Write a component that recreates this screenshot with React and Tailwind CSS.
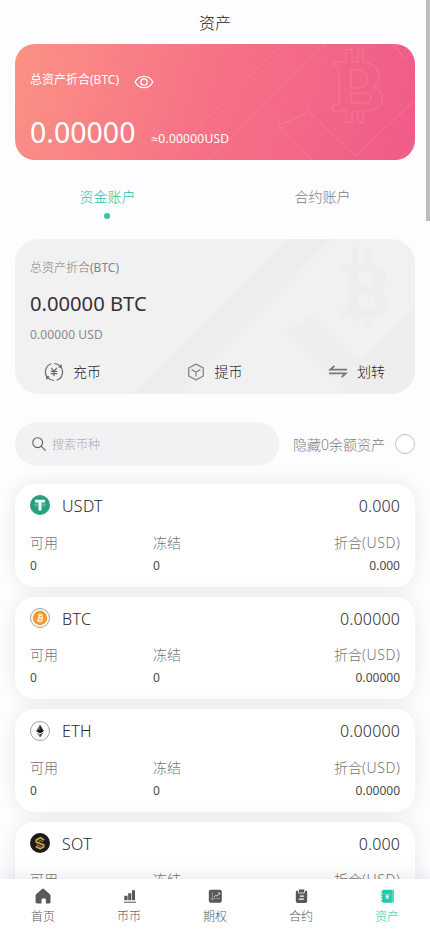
const coins = [
  { name: "USDT", total: "0.000", icon: UsdtIcon },
  { name: "BTC", total: "0.00000", icon: BtcIcon },
  { name: "ETH", total: "0.00000", icon: EthIcon },
  { name: "SOT", total: "0.000", icon: SotIcon },
];

const tabs = [
  { label: "首页", icon: HomeIcon },
  { label: "币币", icon: BarsIcon },
  { label: "期权", icon: OptionIcon },
  { label: "合约", icon: ContractIcon },
  { label: "资产", icon: AssetsIcon, active: true },
];

function UsdtIcon() {
  return (
    <svg width="20" height="20" viewBox="0 0 20 20" className="mb-0.5 shrink-0">
      <circle cx="10" cy="10" r="10" fill="#26a17b" />
      <path d="M5 4.8h10v2.6h-3.5v8.2h-3V7.4H5z" fill="#fff" />
      <path d="M8.5 9C6 9.1 4.3 9.5 4.3 10s1.9 1 5.7 1 5.7-.5 5.7-1-1.7-.9-4.2-1" fill="none" stroke="#9ed6c3" strokeWidth="0.6" />
    </svg>
  );
}

function BtcIcon() {
  return (
    <svg width="20" height="20" viewBox="0 0 20 20" className="mb-px shrink-0">
      <circle cx="10" cy="10" r="9.5" fill="#fffaf0" stroke="#8f8a86" strokeWidth="0.8" />
      <circle cx="10" cy="10" r="7.2" fill="#f09a30" />
      <g transform="rotate(13 10 10)" fill="none" stroke="#fff" strokeWidth="1.1">
        <path d="M7.4 7.2h3.4a1.3 1.3 0 0 1 0 2.7H8.8h2.3a1.5 1.5 0 0 1 0 3H7.4M8.8 7.2v5.6" />
        <path d="M9.2 5.5V7M10.9 5.5V7M9.2 13v1.5M10.9 13v1.5" strokeWidth="0.8" />
      </g>
    </svg>
  );
}

function EthIcon() {
  return (
    <svg width="20" height="20" viewBox="0 0 20 20" className="shrink-0">
      <circle cx="10" cy="10" r="9.5" fill="#fff" stroke="#85858a" strokeWidth="0.8" />
      <path d="M10 3.6 6.2 10.1 10 12.3z" fill="#5d5d60" />
      <path d="M10 3.6l3.8 6.5-3.8 2.2z" fill="#2a2a2d" />
      <path d="M6.2 10.1 10 8.4l3.8 1.7-3.8 2.2z" fill="#161618" />
      <path d="M6.3 11.2 10 13.4v3z" fill="#77777a" />
      <path d="M13.7 11.2 10 13.4v3z" fill="#39393c" />
    </svg>
  );
}

function SotIcon() {
  return (
    <svg width="20" height="20" viewBox="0 0 20 20" className="mb-px shrink-0">
      <circle cx="10" cy="10" r="10" fill="#1c1a1a" />
      <g fill="none" stroke="#c8a83e" strokeWidth="1.7" strokeLinejoin="round">
        <path d="M14.2 6.9 10.4 4.7 6.2 7v2.1l7.5 2.6v2l-3.5 2.1-4.5-2.3" />
        <path d="m12.9 8.7-2.5-1.2-1.8.9M6.6 11.6l3.6 1.7 1.3-.8" strokeWidth="0.9" />
      </g>
    </svg>
  );
}

function HomeIcon() {
  return (
    <svg width="18" height="18" viewBox="0 0 18 18" fill="currentColor">
      <path d="M8.1 2a1.4 1.4 0 0 1 1.8 0l6 5.2c.4.3.6.8.6 1.2v6.7c0 .9-.6 1.4-1.4 1.4h-3.2v-3.7a1.3 1.3 0 0 0-1.3-1.3H8.8a1.3 1.3 0 0 0-1.3 1.3v3.7H3c-.9 0-1.4-.6-1.4-1.4V8.4c0-.5.2-.9.5-1.2z" />
    </svg>
  );
}

function BarsIcon() {
  return (
    <svg width="18" height="18" viewBox="0 0 18 18" fill="currentColor">
      <path d="M4.3 8.7h3.3v4.6H4.3zM8.2 6.2h3.1v7.1H8.2zM12 3.2h3v10.1h-3zM4 14.7h12v1H4z" />
    </svg>
  );
}

function OptionIcon() {
  return (
    <svg width="18" height="18" viewBox="0 0 18 18" fill="none">
      <rect x="2.8" y="2.8" width="13" height="13" rx="2" fill="currentColor" />
      <path d="M6.5 5v8.8M4.3 11.6h9.5" stroke="#aeaeb2" strokeWidth="0.7" />
      <path d="m7.8 10.2 2-2 1.2 1 2.5-3M11.9 5.9h1.7v1.7" stroke="#e4e4e6" strokeWidth="0.9" />
    </svg>
  );
}

function ContractIcon() {
  return (
    <svg width="18" height="18" viewBox="0 0 18 18" fill="none">
      <path d="M5 3.7h9a1.2 1.2 0 0 1 1.2 1.2V14a1.9 1.9 0 0 1-1.9 1.9H5.7A1.9 1.9 0 0 1 3.8 14V4.9A1.2 1.2 0 0 1 5 3.700z" fill="currentColor" />
      <rect x="6.4" y="2.1" width="6.2" height="3.9" rx="0.7" fill="currentColor" stroke="#fff" strokeWidth="0.8" />
      <path d="M7.9 9.1h4M6.9 12.1h5" stroke="#fff" strokeWidth="1.1" />
    </svg>
  );
}

function AssetsIcon() {
  return (
    <svg width="18" height="18" viewBox="0 0 18 18" fill="none">
      <rect x="4.2" y="2.8" width="11.6" height="13" rx="1" fill="currentColor" />
      <path d="M2.8 5.1h2.4M2.8 8h2.4M2.8 10.8h2.4M2.8 13.6h2.4" stroke="currentColor" strokeWidth="1" />
      <path d="M14.3 3v12.6" stroke="#fff" strokeOpacity="0.6" strokeWidth="0.6" />
      <path d="m7.4 6.7 1.9 2.4 1.9-2.4M9.3 9.1v3.2M7.4 9.3h3.8M7.4 10.8h3.8" stroke="#fff" strokeWidth="0.8" />
    </svg>
  );
}

function EyeIcon() {
  return (
    <svg width="20" height="14" viewBox="0 0 20 14" fill="none" stroke="#fff" strokeWidth="1.3">
      <path d="M1.2 7C3 3.2 6.2 1.3 10 1.3S17 3.2 18.8 7C17 10.8 13.8 12.7 10 12.7S3 10.8 1.2 7z" />
      <circle cx="10" cy="7" r="3.2" />
    </svg>
  );
}

function DepositIcon() {
  return (
    <svg width="20" height="20" viewBox="0 0 20 20" fill="none" stroke="#69696c" strokeWidth="1.2">
      <path d="M7.4 1.8A8.5 8.5 0 0 0 4 16M12.6 18.2A8.5 8.5 0 0 0 16 4" />
      <path d="M10 1.5a8.5 8.5 0 0 1 6.3 2.8M10 18.5a8.5 8.5 0 0 1-6.3-2.8" />
      <path d="m14.2 5.8 3.9-.2-.7-3.7zM5.8 14.2l-3.9.2.7 3.7z" fill="#69696c" stroke="none" />
      <path d="m7.2 5.8 2.8 3.3 2.8-3.3M10 9.1v5M6.8 9.4h6.4M6.8 11.7h6.4" />
    </svg>
  );
}

function WithdrawIcon() {
  return (
    <svg width="18" height="18" viewBox="0 0 18 18" fill="none" stroke="#858587" strokeWidth="1.3" strokeLinejoin="round">
      <path d="M9 1.2 16.3 5v8L9 16.8 1.7 13V5z" />
      <path d="M4.6 6.6 9 9l4.4-2.4M9 9v4.6" />
    </svg>
  );
}

function TransferIcon() {
  return (
    <svg width="20" height="14" viewBox="0 0 20 14" fill="none" stroke="#777779" strokeWidth="1.8">
      <path d="M19 4.6H2.2L6.4.8M1 8.400h16.800l-4.200 3.800" />
    </svg>
  );
}

function BannerLines() {
  return (
    <svg
      width="400"
      height="116"
      viewBox="0 0 400 116"
      className="absolute inset-0"
      fill="none"
      stroke="#ff94a8"
      strokeOpacity="0.42"
      strokeWidth="1"
    >
      <path d="M150 116 267 0M194 116 310 0" />
      <path d="m298 116-35-35q17-5 30-14l47 45 60-56M378 0l12 15 7-5M384 116l16-16" />
      <path d="M318 18h13V5.5h6V18h6V5.5h5V18c10 1 16 6 16 15 0 5-2 8-5 10 6 3 8.5 7 8.5 12 0 7-5.5 11-19.5 12v11.5h-5V67h-6v11.5h-6V67h-13v-6h4q2 0 2-3V27q0-3-3-4l-3-1z" />
      <path d="M336 26h9q7 0 7 9t-7 9h-9zM336 49h12q8 0 8 5t-8 5h-12z" />
    </svg>
  );
}

function PanelShapes() {
  return (
    <svg width="400" height="155" viewBox="0 0 400 155" className="absolute inset-0">
      <path d="M117 155 272 0h45L163 155z" fill="#ededed" />
      <path d="M270 91q14-5 27-15l46 45 57-53v87h-66z" fill="#eeeeee" />
      <path
        d="M326 25h11V8h6v17h7V8h6v17c10 1 15 7 15 14 0 6-3 10-7 12 5 2 9 6 9 13 0 9-8 14-17 14v9h-6v-9h-7v9h-6v-9h-11v-7h6V32h-6zm17 8v14h8q7 0 7-7t-7-7zm0 22v15h9q8 0 8-8t-8-7z"
        fill="#eeeeee"
        fillRule="evenodd"
      />
    </svg>
  );
}

function CoinCard({ coin }) {
  const Icon = coin.icon;
  return (
    <div className="h-[102.5px] shrink-0 rounded-[20px] bg-white px-[15px] pt-[11px] shadow-[0_0_18px_rgba(70,60,90,0.1)]">
      <div className="flex h-[22px] items-center text-base text-[#29292c]">
        <Icon />
        <span className="ml-3 tracking-[0.3px]">{coin.name}</span>
        <span className="-mr-[0.2px] ml-auto tracking-[0.2px]">{coin.total}</span>
      </div>
      <div className="mt-[14.7px] flex text-sm leading-[22px] text-[#747477]">
        <span className="w-[123px]">可用</span>
        <span>冻结</span>
        <span className="-mr-[0.6px] ml-auto">
          折合<span className="tracking-[0.6px]">(USD)</span>
        </span>
      </div>
      <div className="mt-px flex text-xs leading-[22px] font-normal text-[#4a4a4d]">
        <span className="w-[123px]">0</span>
        <span>0</span>
        <span className="ml-auto">{coin.total}</span>
      </div>
    </div>
  );
}

export default function App() {
  return (
    <div className="relative flex h-[932px] w-[430px] flex-col overflow-hidden bg-[#fdfcfe] font-['Noto_Sans','Noto_Sans_CJK_SC',sans-serif] font-light">
      <main className="min-h-0 flex-1 overflow-hidden px-[15px]">
        <h1 className="flex h-11 items-center justify-center pt-px text-base text-[#222]">资产</h1>

        <section className="relative h-[116px] overflow-hidden rounded-[20px] bg-[linear-gradient(105deg,#fc9184_0%,#f57086_50%,#f05b88_100%)] px-[15px] text-white">
          <BannerLines />
          <div className="relative flex h-[72px] items-center gap-[15px] text-xs font-normal">
            <span>总资产折合(BTC)</span>
            <span className="mt-1">
              <EyeIcon />
            </span>
          </div>
          <div className="relative flex items-baseline gap-4 leading-8">
            <span className="text-[28.5px] font-normal">0.00000</span>
            <span className="text-xs font-normal tracking-[0.25px]">
              <span className="font-['Liberation_Sans',sans-serif]">≈</span>0.00000USD
            </span>
          </div>
        </section>

        <div className="-mx-[15px] flex h-[79px] text-sm">
          <div className="flex flex-1 flex-col items-center pt-[26px] leading-[22px] text-[#1fc5a5]">
            资金账户
            <i className="mt-[5px] mr-px size-1.5 rounded-full bg-[#2cc9a9]" />
          </div>
          <div className="flex-1 pt-[26px] text-center leading-[22px] text-[#7c7c7f]">合约账户</div>
        </div>

        <section className="relative h-[155px] overflow-hidden rounded-[24px] bg-[#f1f1f2] px-[15px] pt-[18px]">
          <PanelShapes />
          <div className="relative">
            <div className="text-xs leading-[22px] text-[#7c7c7f]">
              总资产折合<span className="font-normal text-[#858588]">(BTC)</span>
            </div>
            <div className="mt-2.5 text-[20.2px] leading-7 font-normal text-[#333336]">0.00000 BTC</div>
            <div className="mt-[9px] text-xs leading-[18px] font-normal tracking-[0.1px] text-[#8a8a8d]">
              0.00000 USD
            </div>
            <div className="mt-4 flex h-6 items-center justify-between pr-[15px] pl-[14px] text-sm text-[#222]">
              <span className="flex items-center gap-[9px]">
                <DepositIcon />
                充币
              </span>
              <span className="flex items-center gap-2.5">
                <WithdrawIcon />
                提币
              </span>
              <span className="flex items-center gap-[9px]">
                <TransferIcon />
                划转
              </span>
            </div>
          </div>
        </section>

        <div className="mt-7 flex h-11 items-center">
          <div className="flex h-11 w-[264px] items-center gap-1.5 rounded-[22px] bg-[#f2f1f4] pl-[17px] text-xs text-[#aaaaae]">
            <svg width="14" height="14" viewBox="0 0 14 14" fill="none" stroke="#5c5c5f" strokeWidth="1.1">
              <circle cx="5.7" cy="5.7" r="4.9" />
              <path d="m9.2 9.2 4.4 4.4" />
            </svg>
            <span className="pt-0.5">搜索币种</span>
          </div>
          <span className="ml-3.5 pt-0.5 text-sm text-[#7c7c7f]">隐藏0余额资产</span>
          <i className="ml-auto size-5 rounded-full border border-[#c4c4c8] bg-white" />
        </div>

        <div className="mt-[18px] flex flex-col gap-2.5">
          {coins.map((coin) => (
            <CoinCard key={coin.name} coin={coin} />
          ))}
        </div>
      </main>

      <nav className="z-10 flex h-[53px] shrink-0 bg-white text-xs shadow-[0_0_20px_rgba(60,50,80,0.13)]">
        {tabs.map(({ label, icon: Icon, active }) => (
          <div
            key={label}
            className={`flex flex-1 flex-col items-center pt-2 ${active ? "text-[#22c8a8]" : "text-[#58585b]"}`}
          >
            <Icon />
            <span className="mt-0.5 leading-5">{label}</span>
          </div>
        ))}
      </nav>

      <div className="absolute top-0 right-0 z-20 h-[221px] w-1 bg-[#bdbdbd]" />
    </div>
  );
}
